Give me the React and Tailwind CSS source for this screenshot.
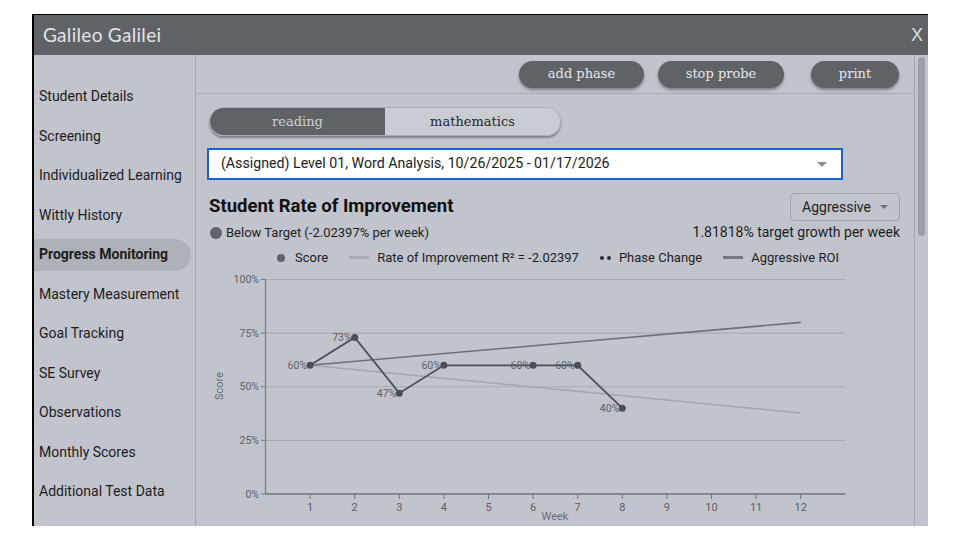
import React from "react";

const navItems = [
  "Student Details",
  "Screening",
  "Individualized Learning",
  "Wittly History",
  "Progress Monitoring",
  "Mastery Measurement",
  "Goal Tracking",
  "SE Survey",
  "Observations",
  "Monthly Scores",
  "Additional Test Data",
];

const scores = [
  { w: 1, p: 60 },
  { w: 2, p: 73 },
  { w: 3, p: 47 },
  { w: 4, p: 60 },
  { w: 6, p: 60 },
  { w: 7, p: 60 },
  { w: 8, p: 40 },
];

const wx = (w) => 69.5 + 44.6 * w;
const py = (p) => 227 - 2.145 * p;

const Chart = () => {
  const line = scores.map((s) => `${wx(s.w)},${py(s.p)}`).join(" ");
  return (
    <svg width="718" height="262" className="block -mt-[1px]">
      {[25, 50, 75, 100].map((g) => (
        <line key={g} x1="69.5" x2="649" y1={py(g)} y2={py(g)} stroke="#a9acb3" strokeWidth="1.2" />
      ))}
      {[0, 25, 50, 75, 100].map((g) => (
        <g key={g}>
          <line x1="65" x2="69.5" y1={py(g)} y2={py(g)} stroke="#6f7277" />
          <text x="63" y={py(g) + 3.5} textAnchor="end" fontSize="10.5" fill="#5d6065" fontFamily="Roboto">
            {g}%
          </text>
        </g>
      ))}
      <line x1="69.5" x2="69.5" y1="12.5" y2="227" stroke="#7a7d82" strokeWidth="1.3" />
      <line x1="69.5" x2="649" y1="227" y2="227" stroke="#6f7277" strokeWidth="1.6" />
      {Array.from({ length: 12 }, (_, i) => i + 1).map((w) => (
        <g key={w}>
          <line x1={wx(w)} x2={wx(w)} y1="227" y2="232" stroke="#6f7277" />
          <text x={wx(w)} y="244" textAnchor="middle" fontSize="11" fill="#5d6065" fontFamily="Roboto">
            {w}
          </text>
        </g>
      ))}
      <text x="359" y="253" textAnchor="middle" fontSize="11" fill="#6a6d72" fontFamily="Roboto">
        Week
      </text>
      <text
        x="27"
        y="119"
        textAnchor="middle"
        fontSize="11"
        fill="#6a6d72"
        fontFamily="Roboto"
        transform="rotate(-90 27 119)"
      >
        Score
      </text>
      <line x1={wx(1)} y1={py(60)} x2={wx(12)} y2={py(37.74)} stroke="#a2a5aa" strokeWidth="1.6" />
      <line x1={wx(1)} y1={py(60)} x2={wx(12)} y2={py(80)} stroke="#6d7075" strokeWidth="1.6" />
      <polyline points={line} fill="none" stroke="#4b4e53" strokeWidth="1.8" />
      {scores.map((s) => (
        <g key={s.w}>
          <circle cx={wx(s.w)} cy={py(s.p)} r="3.5" fill="#4b4e53" />
          <text
            x={wx(s.w) - 3}
            y={py(s.p) + 3.5}
            textAnchor="end"
            fontSize="10.5"
            fill="#5d6065"
            fontFamily="Roboto"
          >
            {s.p}%
          </text>
        </g>
      ))}
    </svg>
  );
};

const PillButton = ({ children, className }) => (
  <button
    className={`h-[27px] rounded-full bg-[#5f6368] text-[13px] text-[#e6e7e9] font-['DejaVu_Serif',serif] shadow-[0_2px_3px_rgba(0,0,0,0.35)] ${className}`}
  >
    {children}
  </button>
);

export default function App() {
  return (
    <div className="w-[960px] h-[540px] bg-white pt-[14px] pl-[32px] font-['Roboto',sans-serif] overflow-hidden">
      <div className="w-[896px] h-[512px] border-t border-l-2 border-black flex flex-col bg-[#c1c4cc]">
        <div className="h-[40px] bg-[#5f6368] flex items-center justify-between pl-[9px] pr-[5px]">
          <span className="text-[19px] text-[#e3e4e6] font-['Lato',sans-serif] tracking-[0.3px]">Galileo Galilei</span>
          <span className="text-[18px] text-[#dcdde0] font-['Liberation_Sans',sans-serif]">X</span>
        </div>
        <div className="flex flex-1 min-h-0">
          <div className="w-[162px] border-r border-[#a5a8af] pt-[22px]">
            {navItems.map((item) => {
              const active = item === "Progress Monitoring";
              return (
                <div key={item} className="h-[39.5px] flex items-center">
                  <div
                    className={`w-[157px] h-[32px] flex items-center pl-[5px] text-[14px] text-[#1c1c1e] rounded-r-full ${
                      active ? "bg-[#aeb1b8] font-bold" : ""
                    }`}
                  >
                    {item}
                  </div>
                </div>
              );
            })}
          </div>
          <div className="flex-1 flex">
            <div className="w-[718px] flex flex-col overflow-hidden">
              <div className="h-[39px] shrink-0 border-b border-[#a7aab0] flex items-center justify-end pr-[15px]">
                <PillButton className="w-[125px]">add phase</PillButton>
                <PillButton className="w-[126px] ml-[14px]">stop probe</PillButton>
                <PillButton className="w-[88px] ml-[27px]">print</PillButton>
              </div>
              <div className="pl-[13px] pt-[13px]">
                <div className="flex w-[352px] h-[29px] rounded-full overflow-hidden shadow-[0_2px_2px_rgba(0,0,0,0.35)] border border-[#a9acb2] font-['DejaVu_Serif',serif] text-[13px]">
                  <div className="w-[175px] bg-[#5f6368] text-[#cfd1d5] flex items-center justify-center">reading</div>
                  <div className="flex-1 bg-[#c9ccd2] text-[#26272a] flex items-center justify-center">mathematics</div>
                </div>
              </div>
              <div className="pl-[11px] pt-[12px]">
                <div className="w-[636px] h-[32px] bg-white border-2 border-[#1f5fcf] flex items-center justify-between pl-[12px] pr-[14px]">
                  <span className="text-[14.2px] text-[#222]">(Assigned) Level 01, Word Analysis, 10/26/2025 - 01/17/2026</span>
                  <span className="w-0 h-0 border-l-[5px] border-r-[5px] border-t-[5px] border-l-transparent border-r-transparent border-t-[#8a8d92]"></span>
                </div>
              </div>
              <div className="pl-[13px] pr-[14px] pt-[13px] flex items-center justify-between">
                <span className="text-[18.5px] font-bold text-[#111]">Student Rate of Improvement</span>
                <div className="w-[110px] h-[28px] border border-[#9fa2a8] rounded-[4px] flex items-center justify-center gap-[9px] text-[14px] text-[#222]">
                  Aggressive
                  <span className="w-0 h-0 border-l-[4px] border-r-[4px] border-t-[4px] border-l-transparent border-r-transparent border-t-[#6f7277]"></span>
                </div>
              </div>
              <div className="pl-[14px] pr-[14px] pt-[1px] flex items-center justify-between">
                <div className="flex items-center gap-[4px] text-[13px] text-[#1e1e20]">
                  <span className="w-[12px] h-[12px] rounded-full bg-[#5f6368]"></span>
                  Below Target (-2.02397% per week)
                </div>
                <span className="text-[14px] text-[#1e1e20]">1.81818% target growth per week</span>
              </div>
              <div className="flex items-center justify-center gap-[21px] pt-[5px] pl-[6px] text-[13px] text-[#1e1e20]">
                <div className="flex items-center gap-[10px]">
                  <span className="w-[8px] h-[8px] rounded-full bg-[#5f6368]"></span>
                  Score
                </div>
                <div className="flex items-center gap-[8px]">
                  <span className="w-[20px] h-[3px] bg-[#a8abb0]"></span>
                  Rate of Improvement R² = -2.02397
                </div>
                <div className="flex items-center gap-[8px]">
                  <span className="flex gap-[3px]">
                    <span className="w-[4px] h-[4px] rounded-full bg-[#2c2d30]"></span>
                    <span className="w-[4px] h-[4px] rounded-full bg-[#2c2d30]"></span>
                  </span>
                  Phase Change
                </div>
                <div className="flex items-center gap-[8px]">
                  <span className="w-[20px] h-[3px] bg-[#75787d]"></span>
                  Aggressive ROI
                </div>
              </div>
              <Chart />
            </div>
            <div className="w-[14px] border-l border-[#a5a8af] pl-[3px] pt-[2px]">
              <div className="w-[7px] h-[179px] rounded-full bg-[#9c9fa5]"></div>
            </div>
          </div>
        </div>
      </div>
    </div>
  );
}
